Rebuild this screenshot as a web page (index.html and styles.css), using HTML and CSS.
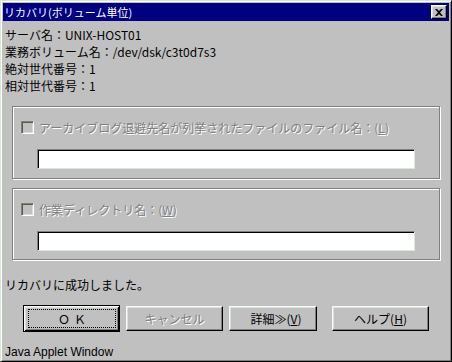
FILE: index.html
```html
<!DOCTYPE html>
<html lang="ja">
<head>
<meta charset="utf-8">
<title>リカバリ(ボリューム単位)</title>
<link rel="stylesheet" href="styles.css">
</head>
<body>
<div class="window">
  <div class="titlebar">
    <span class="title">リカバリ(ボリューム単位)</span>
    <span class="close"><svg width="8" height="7" viewBox="0 0 8 7"><path d="M0 0h2l2 2 2-2h2L5 3.5 8 7H6L4 5 2 7H0l3-3.5z" fill="#000"/></svg></span>
  </div>
  <div class="content">
    <div class="info">
      <div>サーバ名：UNIX-HOST01</div>
      <div>業務ボリューム名：/dev/dsk/c3t0d7s3</div>
      <div>絶対世代番号：1</div>
      <div>相対世代番号：1</div>
    </div>
    <div class="group group-first">
      <div class="check-row">
        <span class="checkbox"></span>
        <span class="disabled">アーカイブログ退避先名が列挙されたファイルのファイル名：(<u>L</u>)</span>
      </div>
      <div class="field"></div>
    </div>
    <div class="group group-second">
      <div class="check-row">
        <span class="checkbox"></span>
        <span class="disabled">作業ディレクトリ名：(<u>W</u>)</span>
      </div>
      <div class="field"></div>
    </div>
    <div class="status">リカバリに成功しました。</div>
    <div class="buttons">
      <div class="btn btn-default"><span class="focus">ＯＫ</span></div>
      <div class="btn btn-cancel"><span class="disabled">キャンセル</span></div>
      <div class="btn btn-detail">詳細≫(<u>V</u>)</div>
      <div class="btn btn-help">ヘルプ(<u>H</u>)</div>
    </div>
    <div class="applet">Java Applet Window</div>
  </div>
</div>
</body>
</html>
```

FILE: styles.css
```css
* { box-sizing: border-box; }
html, body { margin: 0; padding: 0; background: #c0c0c0; }
body {
  font-family: "Noto Sans CJK JP", "Noto Sans", sans-serif;
  font-size: 12px;
  color: #000;
}
.window {
  width: 452px;
  height: 362px;
  background: #c0c0c0;
  border: 1px solid;
  border-color: #d6ead6 #000 #000 #d6ead6;
  box-shadow: inset 1px 1px #fff, inset -1px -1px #808080;
  padding: 2px;
  display: flex;
  flex-direction: column;
}
.titlebar {
  height: 18px;
  background: #000080;
  color: #fff;
  display: flex;
  align-items: center;
  justify-content: space-between;
  padding: 0 2px 0 1px;
}
.title { line-height: 18px; font-size: 11px; }
.close {
  width: 16px;
  height: 14px;
  background: #c0c0c0;
  border: 1px solid;
  border-color: #fff #000 #000 #fff;
  box-shadow: inset -1px -1px #808080, inset 1px 1px #dfdfdf;
  display: flex;
  align-items: center;
  justify-content: center;
}
.close svg { display: block; }
.content {
  flex: 1;
  display: flex;
  flex-direction: column;
  padding: 5px 0 0 2px;
}
.info { line-height: 17px; }
.group {
  width: 428px;
  margin-left: 7px;
  border: 1px solid #808080;
  box-shadow: inset 1px 1px #fff, 1px 1px #fff;
  padding: 14px 0 0 8px;
}
.group-first { margin-top: 12px; height: 73px; }
.group-second { margin-top: 9px; height: 72px; }
.check-row {
  display: flex;
  align-items: center;
  height: 13px;
  gap: 5px;
}
.checkbox {
  width: 13px;
  height: 13px;
  flex: none;
  background: #c0c0c0;
  border: 1px solid;
  border-color: #808080 #fff #fff #808080;
  box-shadow: inset 1px 1px #5a5a40, inset -1px -1px #dadada;
}
.disabled {
  color: #808080;
  text-shadow: 1px 1px #fff;
  white-space: nowrap;
}
.disabled u { text-decoration-color: #808080; }
.field {
  width: 378px;
  height: 20px;
  margin: 15px 0 0 16px;
  background: #fff;
  border: 1px solid;
  border-color: #808080 #d6ead6 #d6ead6 #808080;
  box-shadow: inset 1px 1px #000;
}
.status {
  margin-top: 16px;
  line-height: 17px;
}
.buttons {
  display: flex;
  align-items: center;
  height: 27px;
  margin-top: 12px;
  padding-left: 18px;
}
.btn {
  height: 25px;
  width: 97px;
  border: 1px solid;
  border-color: #f4fff4 #000 #000 #f4fff4;
  box-shadow: inset -1px -1px #808080, inset 1px 1px #dfdfdf;
  display: flex;
  align-items: center;
  justify-content: center;
  line-height: 14px;
  white-space: nowrap;
}
.btn-default {
  height: 27px;
  border: 1px solid #000;
  box-shadow: inset 1px 1px #f4fff4, inset -1px -1px #000, inset 2px 2px #dfdfdf, inset -2px -2px #808080;
  padding: 3px 3px 3px 4px;
}
.focus {
  flex: 1;
  align-self: stretch;
  border: 1px dotted #000;
  display: flex;
  align-items: center;
  justify-content: center;
  letter-spacing: 4px;
  padding-left: 4px;
}
.btn-cancel { margin-left: 6px; }
.btn-detail { margin-left: 6px; width: 88px; padding-left: 6px; }
.btn-help { margin-left: 15px; }
.applet {
  margin-top: 13px;
  font-family: "Liberation Sans", Arial, sans-serif;
  font-size: 12px;
  line-height: 14px;
}
```
